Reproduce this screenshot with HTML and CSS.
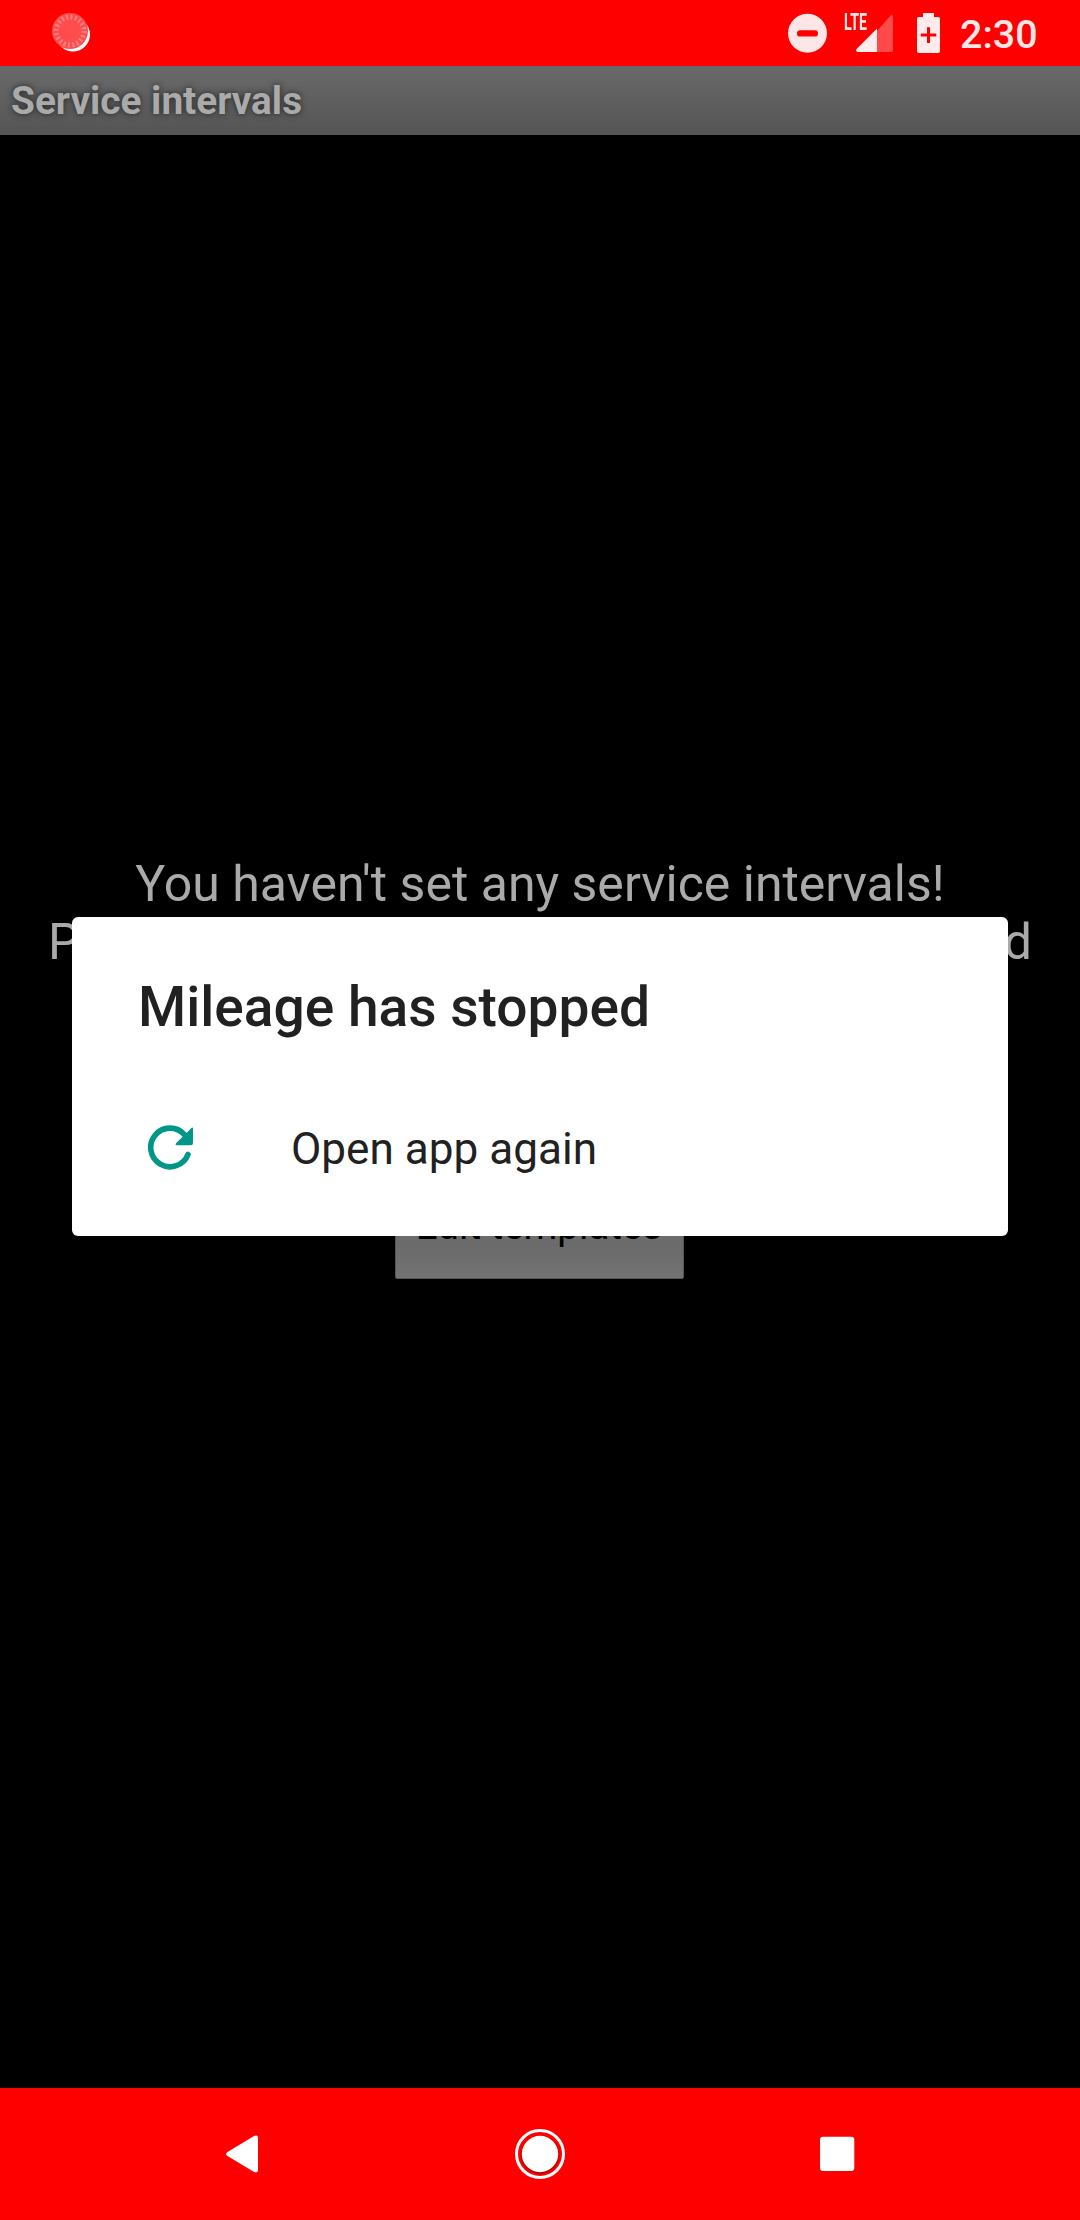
FILE: index.html
```html
<!DOCTYPE html>
<html lang="en">
<head>
<meta charset="utf-8">
<title>Service intervals</title>
<link rel="stylesheet" href="styles.css">
</head>
<body>
<div class="screen">
  <header class="status-bar">
    <svg class="spinner" width="40" height="42" viewBox="0 0 40 42">
      <defs><filter id="soft"><feGaussianBlur stdDeviation="0.6"/></filter></defs>
      <circle cx="22" cy="23.5" r="17" fill="#fff" filter="url(#soft)"/>
      <circle cx="19" cy="20" r="18" fill="#ff4d4d"/>
      <circle cx="19" cy="20" r="14" fill="none" stroke="#ff8080" stroke-width="5" stroke-dasharray="2 2.398"/>
    </svg>
    <div class="status-icons">
      <svg class="dnd" width="40" height="66" viewBox="0 0 40 66">
        <circle cx="19.5" cy="33.3" r="19.5" fill="#ffe6e6"/>
        <rect x="9" y="30.2" width="21" height="6.4" rx="3.2" fill="#f00"/>
      </svg>
      <div class="signal">
        <span class="lte">LTE</span>
        <svg width="38" height="66" viewBox="0 0 38 66">
          <path d="M21 31 34.500 15.600Q37 13.500 37 17V50Q37 52 35 52H21Z" fill="#ff4a4a"/>
          <path d="M21 28.500V52H1.500Q-.8 51 .6 49Z" fill="#ffebeb"/>
        </svg>
      </div>
      <svg class="battery" width="23" height="66" viewBox="0 0 23 66">
        <path d="M6 13H17V17H21.500Q23 17 23 18.500V51Q23 53 21 53H2Q0 53 0 51V18.500Q0 17 1.500 17H6Z" fill="#ffebeb"/>
        <path d="M11.500 27.200V43M3.800 35H19.300" stroke="#f00" stroke-width="3" fill="none"/>
      </svg>
      <span class="clock">2:30</span>
    </div>
  </header>
  <h1 class="title-bar">Service intervals</h1>
  <main class="content">
    <p class="message">You haven't set any service intervals!</p>
    <p class="message hint"><span>P</span><span>d</span></p>
    <button class="edit">Edit templates</button>
    <section class="dialog">
      <h2 class="dialog-title">Mileage has stopped</h2>
      <div class="dialog-action">
        <svg width="46" height="46" viewBox="0 0 46 46">
          <path d="M40 29.500A19.300 19.300 0 1 1 36.500 9.700" fill="none" stroke="#009688" stroke-width="5.600" stroke-linecap="round"/>
          <path d="M43.200 3.200Q45 1.600 45 4V18Q45 20.200 42.800 20.200H29Q26.500 20 28.300 18Z" fill="#009688"/>
        </svg>
        <span class="action-label">Open app again</span>
      </div>
    </section>
  </main>
  <nav class="nav-bar">
    <svg width="68" height="68" viewBox="0 0 68 68">
      <path d="M19.500 32 46 16Q50 14.500 50 18V50Q50 53.500 46 52L19.500 36Q16.500 34 19.500 32Z" fill="#fff"/>
    </svg>
    <svg width="68" height="68" viewBox="0 0 68 68">
      <circle cx="34" cy="34" r="23.500" fill="none" stroke="#fff" stroke-width="3"/>
      <circle class="home-dot" cx="34" cy="34" r="18.200" fill="#fff"/>
    </svg>
    <svg width="68" height="68" viewBox="0 0 68 68">
      <rect x="17" y="16.700" width="34.300" height="34.300" rx="3" fill="#fff"/>
    </svg>
  </nav>
</div>
</body>
</html>
```
FILE: styles.css
```css
* { box-sizing: border-box; }
body { margin: 0; background: #000; font-family: Roboto, sans-serif; }
svg { display: block; flex: none; }
.screen { width: 1080px; height: 2220px; display: flex; flex-direction: column; overflow: hidden; }

.status-bar { height: 66px; flex: none; background: #f00; display: flex; justify-content: space-between; padding: 0 44px 0 51px; }
.spinner { margin-top: 11px; }
.status-icons { display: flex; }
.signal { display: flex; margin-left: 16px; width: 49px; }
.lte { width: 12px; font-size: 23px; font-weight: 700; line-height: 28px; padding-top: 9px; color: #ffe6e6; white-space: nowrap; transform: scaleX(.62); transform-origin: 0 0; }
.battery { margin-left: 24px; }
.clock { margin-left: 20px; width: 76px; font-size: 39.400px; font-weight: 500; line-height: 70px; color: #ffe6e6; white-space: nowrap; }

.title-bar { margin: 0; height: 69px; flex: none; padding-left: 11px; background: linear-gradient(#6a6a6a, #545454); color: #aaa; font-size: 38.800px; font-weight: 700; line-height: 70px; text-shadow: 0 0 6px #222; }

.content { flex: 1; position: relative; display: flex; flex-direction: column; align-items: center; padding-top: 720px; }
.message { margin: 0; height: 58px; color: #aaa; font-size: 50px; line-height: 58px; white-space: nowrap; }
.hint { width: 984px; display: flex; justify-content: space-between; }
.edit { margin: 184px 2px 0 0; width: 289px; height: 124px; padding: 16px 0 0; border: 1px solid #555; border-radius: 2px; background: linear-gradient(#666, #6c6c6c 80%, #737373); color: #000; font: 38.500px Roboto, sans-serif; }

.dialog { position: absolute; left: 72px; top: 782px; width: 936px; height: 319px; padding: 57px 66px 0; border-radius: 6px; background: #fff; color: #212121; }
.dialog-title { margin: 0; font-size: 55.100px; font-weight: 500; line-height: 66px; white-space: nowrap; }
.dialog-action { display: flex; align-items: center; margin: 61px 0 0 10px; height: 94px; gap: 97px; }
.action-label { font-size: 44.100px; line-height: 52px; padding-top: 2px; white-space: nowrap; }

.nav-bar { height: 132px; flex: none; background: #f00; display: flex; justify-content: space-between; align-items: center; padding: 0 209px 0 208px; }
.home-dot { filter: drop-shadow(0 1px 1px rgba(0, 0, 0, .55)); }
```
